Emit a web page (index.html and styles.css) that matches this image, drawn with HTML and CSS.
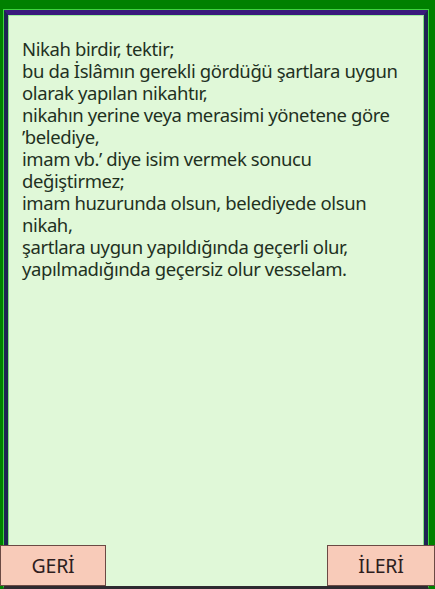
FILE: index.html
```html
<!DOCTYPE html>
<html lang="tr">
<head>
<meta charset="utf-8">
<title>Nikah</title>
<link rel="stylesheet" href="styles.css">
</head>
<body>
<div class="screen">
  <div class="frame">
    <div class="frame-inner">
      <div class="page">
        <p class="text">Nikah birdir, tektir;<br>bu da İslâmın gerekli gördüğü şartlara uygun<br>olarak yapılan nikahtır,<br>nikahın yerine veya merasimi yönetene göre<br>’belediye,<br>imam vb.’ diye isim vermek sonucu<br>değiştirmez;<br>imam huzurunda olsun, belediyede olsun<br>nikah,<br>şartlara uygun yapıldığında geçerli olur,<br>yapılmadığında geçersiz olur vesselam.</p>
      </div>
    </div>
  </div>
  <div class="nav">
    <button class="btn btn-back">GERİ</button>
    <button class="btn btn-next">İLERİ</button>
  </div>
</div>
</body>
</html>
```
FILE: styles.css
```css
html, body {
  margin: 0;
  padding: 0;
}
body {
  background: #008000;
  font-family: "Noto Sans", "Open Sans", sans-serif;
}
.screen {
  position: relative;
  height: 589px;
  box-sizing: border-box;
  padding: 9px 6px 0 3px;
  background: #008000;
  display: flex;
  flex-direction: column;
}
.frame {
  flex: 1;
  display: flex;
  flex-direction: column;
  border: 1px solid #3fd43f;
  border-bottom: 3px solid #2e2a30;
}
.frame-inner {
  flex: 1;
  display: flex;
  flex-direction: column;
  border-top: 5px solid #3a1a7c;
  border-left: 4px solid #1d2352;
  border-right: 4px solid #1d2352;
}
.page {
  flex: 1;
  background: #e0f8d8;
  border-top: 1px solid #9ff09f;
  border-left: 1px solid #7fe07f;
  border-right: 1px solid #7fe07f;
  padding: 22px 4px 0 13px;
}
.text {
  margin: 0;
  font-size: 18.5px;
  letter-spacing: -0.4px;
  line-height: 22px;
  color: #1f311f;
  white-space: nowrap;
}
.nav {
  position: absolute;
  left: 0;
  right: 0;
  bottom: 3px;
  display: flex;
  justify-content: space-between;
}
.btn {
  height: 41px;
  background: #f8cbb9;
  border: 1px solid #6b4a44;
  font-family: "Noto Sans", "Open Sans", sans-serif;
  font-size: 19.5px;
  letter-spacing: -0.2px;
  color: #2e1e1e;
  padding: 0;
  margin: 0;
}
.btn-back {
  width: 106px;
}
.btn-next {
  width: 108px;
}
```
